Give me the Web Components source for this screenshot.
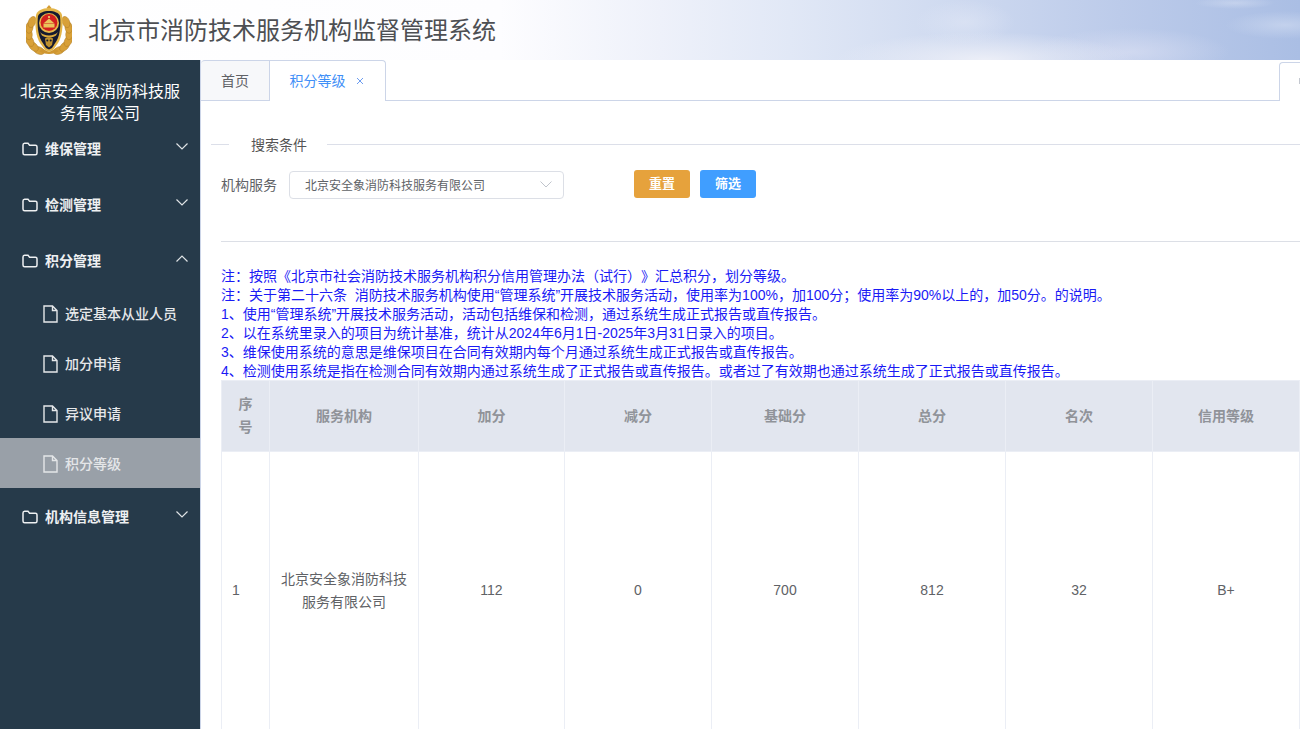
<!DOCTYPE html>
<html lang="zh-CN">
<head>
<meta charset="utf-8">
<title>北京市消防技术服务机构监督管理系统</title>
<style>
html, body { margin: 0; height: 100%; overflow: hidden; background: #fff; }
body { font-family: "Noto Sans CJK SC", "Liberation Sans", sans-serif; text-spacing-trim: space-all; }
</style>
</head>
<body>
<app-shell>
	<app-header slot="header">北京市消防技术服务机构监督管理系统</app-header>
	<side-nav slot="nav" org="北京安全象消防科技服务有限公司">
		<nav-group label="维保管理"></nav-group>
		<nav-group label="检测管理"></nav-group>
		<nav-group label="积分管理" open></nav-group>
		<nav-item>选定基本从业人员</nav-item>
		<nav-item>加分申请</nav-item>
		<nav-item>异议申请</nav-item>
		<nav-item active>积分等级</nav-item>
		<nav-group label="机构信息管理"></nav-group>
	</side-nav>
	<tab-bar slot="tabs"></tab-bar>
	<search-panel slot="main"></search-panel>
	<note-list slot="main">
		<p>注：按照《北京市社会消防技术服务机构积分信用管理办法（试行）》汇总积分，划分等级。</p>
		<p>注：关于第二十六条&nbsp;&nbsp;消防技术服务机构使用“管理系统”开展技术服务活动，使用率为100%，加100分；使用率为90%以上的，加50分。的说明。</p>
		<p>1、使用“管理系统”开展技术服务活动，活动包括维保和检测，通过系统生成正式报告或直传报告。</p>
		<p>2、以在系统里录入的项目为统计基准，统计从2024年6月1日-2025年3月31日录入的项目。</p>
		<p>3、维保使用系统的意思是维保项目在合同有效期内每个月通过系统生成正式报告或直传报告。</p>
		<p>4、检测使用系统是指在检测合同有效期内通过系统生成了正式报告或直传报告。或者过了有效期也通过系统生成了正式报告或直传报告。</p>
	</note-list>
	<score-table slot="main"></score-table>
</app-shell>

<script>
// Page frame
class AppShell extends HTMLElement {
	constructor() {
		super();
		this.attachShadow({ mode: 'open' });
		this.shadowRoot.innerHTML = `
			<style>
				:host { display: flex; flex-direction: column; height: 729px; overflow: hidden; }
				.body { display: flex; flex: 1; min-height: 0; }
				.content { flex: 1; min-width: 0; display: flex; flex-direction: column; border-left: 1px solid #ccd5e8; }
			</style>
			<slot name="header"></slot>
			<div class="body">
				<slot name="nav"></slot>
				<div class="content">
					<slot name="tabs"></slot>
					<slot name="main"></slot>
				</div>
			</div>
		`;
	}
}

// Top banner with emblem and system name
class AppHeader extends HTMLElement {
	constructor() {
		super();
		this.attachShadow({ mode: 'open' });
		let leaves = '';
		// wreath leaves, mirrored on both sides
		[[13,45.5,-68],[7.5,41.5,-46],[3.8,36,-26],[2.6,29,-8],[3.4,22.5,8],[6,17,22]].forEach(([x, y, r]) => {
			leaves += `<ellipse cx="${x}" cy="${y}" rx="3.6" ry="5.8" transform="rotate(${r} ${x} ${y})"/>`;
			leaves += `<ellipse cx="${46 - x}" cy="${y}" rx="3.6" ry="5.8" transform="rotate(${-r} ${46 - x} ${y})"/>`;
		});
		this.shadowRoot.innerHTML = `
			<style>
				:host {
					display: flex; align-items: center; height: 60px; flex: none;
					padding-left: 26px; box-sizing: border-box;
					color: #4d4f53; font-size: 24px;
					background:
						radial-gradient(ellipse 150px 28px at 985px 60px, rgba(238,240,248,.95), transparent),
						radial-gradient(ellipse 100px 24px at 1130px 52px, rgba(222,226,244,.6), transparent),
						radial-gradient(ellipse 50px 22px at 965px 22px, rgba(226,232,246,.55), transparent),
						radial-gradient(ellipse 60px 14px at 1285px 25px, rgba(205,217,240,.7), transparent),
						radial-gradient(ellipse 40px 6px at 1235px 3px, rgba(220,228,244,.45), transparent),
						linear-gradient(90deg, #fff 0, #fdfdff 500px, #eef1fa 660px, #e1e8f6 790px, #cfdaf0 950px, #bccbea 1120px, #aabee4 1300px);
				}
				svg { width: 46px; height: 50px; flex: none; margin-right: 16px; }
				.title { margin-bottom: 3px; }
			</style>
			<svg viewBox="0 0 46 50" aria-hidden="true">
				<g fill="#d8a038" stroke="#b07c24" stroke-width=".5">${leaves}</g>
				<path d="M23 0 L25.5 3 L23 5 L20.5 3Z" fill="#d49c34"/>
				<path d="M23 3 C30 3 35 6 36 10 C37.5 20 36 32 32 38 L27 45 L23 47 L19 45 L14 38 C10 32 8.5 20 10 10 C11 6 16 3 23 3Z" fill="#e3b548"/>
				<path d="M23 6 C28.5 6 33 8 34 11 C35 20 34 30 30.5 36 L26 43 L23 44.5 L20 43 L15.5 36 C12 30 11 20 12 11 C13 8 17.5 6 23 6Z" fill="#151a30"/>
				<circle cx="23" cy="18" r="10" fill="#e6b94b"/>
				<circle cx="23" cy="17.5" r="8.4" fill="#d2201f"/>
				<rect x="17.5" y="18.5" width="11" height="4" fill="#eac35a"/>
				<path d="M18 18 L23 13.5 L28 18Z" fill="#eac35a"/>
				<circle cx="23" cy="12" r="1.1" fill="#f4d673"/>
				<path d="M14 27 C17.5 31.5 28.5 31.5 32 27 L30 30.5 C27 33 19 33 16 30.5Z" fill="#dbab3d"/>
				<path d="M19 34 C19 31.5 27 31.5 27 34 L26 40 L23 42.5 L20 40Z" fill="#bd902f"/>
				<circle cx="21.3" cy="35.5" r="1" fill="#151a30"/><circle cx="24.7" cy="35.5" r="1" fill="#151a30"/>
				<path d="M13 46 C18 50 28 50 33 46 L29 44 L23 47 L17 44Z" fill="#cf9630"/>
			</svg>
			<span class="title"><slot></slot></span>
		`;
	}
}

// Sidebar
class SideNav extends HTMLElement {
	constructor() {
		super();
		this.attachShadow({ mode: 'open' });
		this.shadowRoot.innerHTML = `
			<style>
				:host { display: block; width: 200px; flex: none; background: #263a4a; color: #fff; }
				.org {
					height: 61px; box-sizing: border-box; padding: 19px 16px 0;
					font-size: 16px; line-height: 22px; text-align: center;
				}
			</style>
			<div class="org"></div>
			<slot></slot>
		`;
	}

	connectedCallback() {
		this.shadowRoot.querySelector('.org').textContent = this.getAttribute('org');
	}
}

class NavGroup extends HTMLElement {
	connectedCallback() {
		if (this.shadowRoot) return;
		this.attachShadow({ mode: 'open' });
		const open = this.hasAttribute('open');
		this.shadowRoot.innerHTML = `
			<style>
				:host {
					display: flex; align-items: center; height: 56px; box-sizing: border-box;
					padding: 0 12px 0 22px; font-size: 14px; font-weight: 700; color: #eef0f2;
				}
				.folder { width: 16px; height: 14px; margin-right: 7px; flex: none; }
				.label { flex: 1; margin-top: -2px; }
				.arrow { width: 12px; height: 7px; flex: none; margin-top: -6px; }
			</style>
			<svg class="folder" viewBox="0 0 16 14" fill="none" stroke="#eef0f2" stroke-width="1.5">
				<path d="M1 3 Q1 1.2 2.6 1.2 H6 L7.6 3.2 H13.4 Q15 3.2 15 4.8 V11 Q15 12.8 13.4 12.8 H2.6 Q1 12.8 1 11Z"/>
			</svg>
			<span class="label">${this.getAttribute('label')}</span>
			<svg class="arrow" viewBox="0 0 12 7" fill="none" stroke="#dfe3e6" stroke-width="1.2">
				<path d="${open ? 'M.5 6.5 L6 1 L11.5 6.5' : 'M.5 .5 L6 6 L11.5 .5'}"/>
			</svg>
		`;
	}
}

class NavItem extends HTMLElement {
	constructor() {
		super();
		this.attachShadow({ mode: 'open' });
		this.shadowRoot.innerHTML = `
			<style>
				:host {
					display: flex; align-items: center; height: 50px; box-sizing: border-box;
					padding-left: 43px; font-size: 14px; font-weight: 500; color: #e6e8ea;
				}
				:host([active]) { background: #99a0a8; color: #e4e6e8; margin: -1px 0 1px; padding-top: 2px; }
				svg { width: 15px; height: 18px; margin-right: 7px; flex: none; }
				.text { margin-top: -2px; }
			</style>
			<svg viewBox="0 0 15 18" fill="none" stroke="currentColor" stroke-width="1.4">
				<path d="M1 1 H9.5 L14 5.5 V17 H1Z M9.5 1 V5.5 H14"/>
			</svg>
			<span class="text"><slot></slot></span>
		`;
	}
}

// Open tabs row
class TabBar extends HTMLElement {
	constructor() {
		super();
		this.attachShadow({ mode: 'open' });
		this.shadowRoot.innerHTML = `
			<style>
				:host { display: flex; height: 41px; flex: none; font-size: 14px; box-sizing: border-box; }
				.tab { display: flex; align-items: center; justify-content: center; box-sizing: border-box; padding-bottom: 2px; }
				.home { width: 68px; background: #f7f8fa; color: #606266; border-bottom: 1px solid #ccd5e8; border-top: 1px solid #ccd5e8; border-top-left-radius: 4px; }
				.active {
					width: 117px; color: #3f8ff7; gap: 10px; background: #fff; padding-right: 2px;
					border: 1px solid #ccd5e8; border-bottom: 0; border-top-right-radius: 4px; border-top-left-radius: 0;
				}
				.close { width: 8px; height: 8px; margin-top: 2px; }
				.rest { flex: 1; border-bottom: 1px solid #ccd5e8; }
				.extra {
					width: 21px; margin-top: 2px; border: 1px solid #ccd5e8; border-width: 1px 0 0 1px;
					border-top-left-radius: 4px; display: flex; align-items: center; justify-content: flex-end; box-sizing: border-box;
				}
				.extra i { width: 1px; height: 6px; background: #c4c8d0; margin-bottom: 2px; }
			</style>
			<div class="tab home">首页</div>
			<div class="tab active"><span>积分等级</span>
				<svg class="close" viewBox="0 0 8 8" stroke="#6d9df0" stroke-width="1"><path d="M1 1 L7 7 M7 1 L1 7"/></svg>
			</div>
			<div class="rest"></div>
			<div class="extra"><i></i></div>
		`;
	}
}

// Filter form
class SearchPanel extends HTMLElement {
	constructor() {
		super();
		this.attachShadow({ mode: 'open' });
		this.shadowRoot.innerHTML = `
			<style>
				:host { display: block; flex: none; padding: 33px 0 0 10px; color: #606266; }
				.legend { display: flex; align-items: center; height: 20px; font-size: 14px; color: #555; }
				.legend i { height: 1px; background: #dcdfe9; }
				.legend i:first-child { width: 18px; }
				.legend i:last-child { flex: 1; }
				.legend span { padding: 0 20px 0 22px; margin-top: -1px; }
				.form { display: flex; align-items: center; margin: 15px 0 0 10px; font-size: 14px; height: 30px; }
				.label { width: 68px; margin-top: -1px; }
				.select {
					width: 275px; height: 28px; box-sizing: border-box; border: 1px solid #dcdfe6; border-radius: 4px;
					display: flex; align-items: center; justify-content: space-between;
					padding: 0 11px 0 15px; font-size: 12px; margin-top: 1px;
				}
				.select svg { width: 12px; height: 7px; }
				button {
					width: 56px; height: 28px; border: 0; border-radius: 3px; color: #fff;
					font: 700 13px "Noto Sans CJK SC", sans-serif; padding: 0 0 2px; margin-top: -1px;
				}
				.reset { background: #e6a23c; margin-left: 70px; }
				.go { background: #409eff; margin-left: 10px; }
				.rule { height: 1px; background: #dcdfe6; margin: 42px 0 0 10px; }
			</style>
			<div class="legend"><i></i><span>搜索条件</span><i></i></div>
			<div class="form">
				<span class="label">机构服务</span>
				<div class="select">
					<span>北京安全象消防科技服务有限公司</span>
					<svg viewBox="0 0 12 7" fill="none" stroke="#c0c4cc"><path d="M.5 .5 L6 6 L11.5 .5"/></svg>
				</div>
				<button class="reset">重置</button>
				<button class="go">筛选</button>
			</div>
			<div class="rule"></div>
		`;
	}
}

// Blue remarks above the table
class NoteList extends HTMLElement {
	constructor() {
		super();
		this.attachShadow({ mode: 'open' });
		this.shadowRoot.innerHTML = `
			<style>
				:host {
					display: block; flex: none; padding: 25px 0 0 20px; margin-bottom: -1px; font-size: 14px; line-height: 19px; color: #1a1af5;
					font-family: "Liberation Sans", "Noto Sans CJK SC", sans-serif; white-space: nowrap;
				}
				::slotted(p) { margin: 0; }
			</style>
			<slot></slot>
		`;
	}
}

// Score table
class ScoreTable extends HTMLElement {
	constructor() {
		super();
		this.attachShadow({ mode: 'open' });
		const heads = ['序号', '服务机构', '加分', '减分', '基础分', '总分', '名次', '信用等级'];
		const row = ['1', '北京安全象消防科技服务有限公司', '112', '0', '700', '812', '32', 'B+'];
		const widths = [48, 149, 146, 147, 147, 147, 147, 147];
		this.shadowRoot.innerHTML = `
			<style>
				:host { display: block; flex: none; padding: 0 0 0 20px; font-family: "Liberation Sans", "Noto Sans CJK SC", sans-serif; }
				table { border-collapse: collapse; table-layout: fixed; width: 1078px; font-size: 14px; line-height: 23px; }
				th, td { border: 1px solid #ebeef5; padding: 0 10px; text-align: center; }
				th { height: 68px; padding-bottom: 2px; background: #e2e6ef; color: #909399; font-weight: 700; font-family: "Noto Sans CJK SC", sans-serif; }
				td { height: 277px; color: #606266; }
				td:first-child { text-align: left; }
			</style>
			<table>
				<colgroup>${widths.map((w) => `<col style="width:${w}px">`).join('')}</colgroup>
				<thead><tr>${heads.map((h) => `<th>${h}</th>`).join('')}</tr></thead>
				<tbody><tr>${row.map((c) => `<td>${c}</td>`).join('')}</tr></tbody>
			</table>
		`;
	}
}

customElements.define('app-shell', AppShell);
customElements.define('app-header', AppHeader);
customElements.define('side-nav', SideNav);
customElements.define('nav-group', NavGroup);
customElements.define('nav-item', NavItem);
customElements.define('tab-bar', TabBar);
customElements.define('search-panel', SearchPanel);
customElements.define('note-list', NoteList);
customElements.define('score-table', ScoreTable);
</script>
</body>
</html>
